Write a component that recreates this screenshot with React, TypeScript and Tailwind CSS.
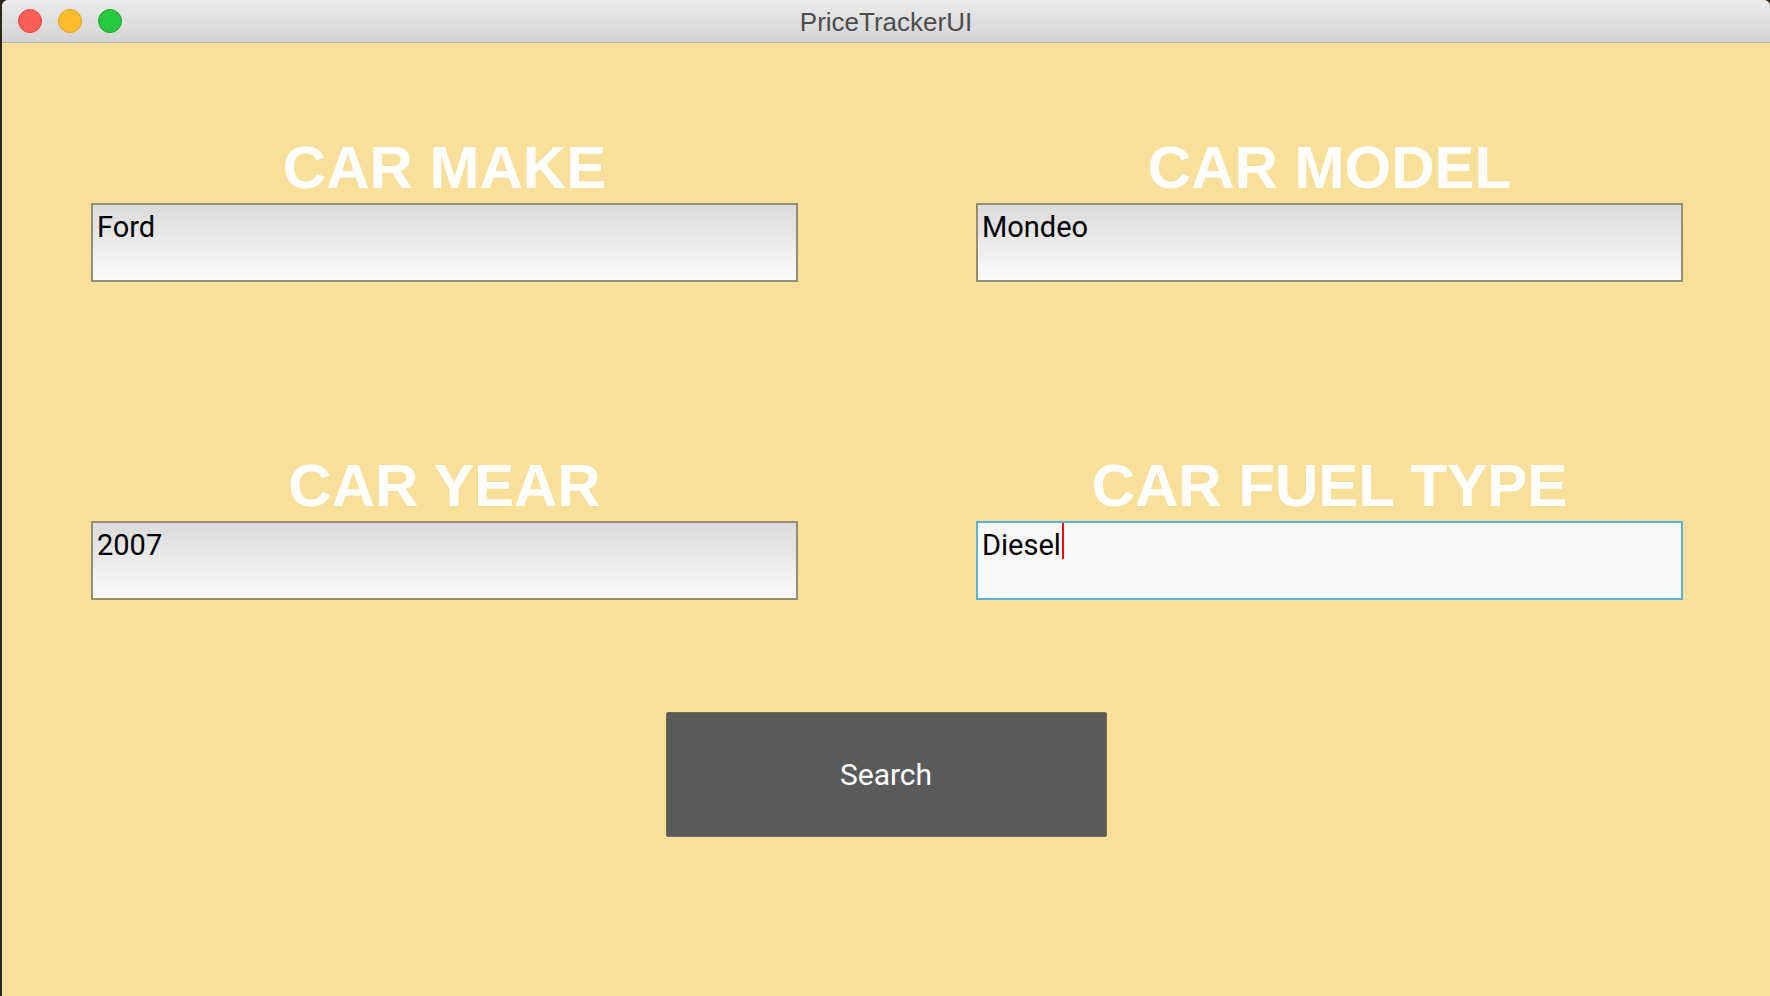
import React from 'react';

/* ─── Title bar ─── */
function TitleBar() {
  return (
    <div className="relative h-[43px] shrink-0 rounded-t-[6px] border-b border-[#b1b1b1] bg-gradient-to-b from-[#ebebeb] to-[#d4d4d4]">
      <div className="flex h-full items-center gap-[16px] pl-[16px]">
        <span className="h-[24px] w-[24px] rounded-full border border-[#e0443e] bg-[#ff5f57]" />
        <span className="h-[24px] w-[24px] rounded-full border border-[#dea123] bg-[#ffbd2e]" />
        <span className="h-[24px] w-[24px] rounded-full border border-[#1aab29] bg-[#28c940]" />
      </div>
      <div className="absolute inset-0 flex items-center justify-center pt-[3px] text-[26px] text-[#4d4d4d] font-['Liberation_Sans',Arial,sans-serif]">
        PriceTrackerUI
      </div>
    </div>
  );
}

/* ─── Field ─── */
interface FieldProps {
  label: string;
  value: string;
  focused?: boolean;
}

function Field({ label, value, focused = false }: FieldProps) {
  return (
    <div className="flex flex-col">
      <div className="text-center text-[60px] font-bold leading-[58px] text-white font-['Liberation_Sans',Arial,sans-serif]">
        {label}
      </div>
      <div
        className={
          focused
            ? 'mt-[6px] h-[79px] border-2 border-[#5ab3d6] bg-[#f8f8f8] pl-[4px] pt-[1px]'
            : 'mt-[6px] h-[79px] border-2 border-[#938e76] bg-gradient-to-b from-[#dbdbdb] to-[#fbfbfb] pl-[4px] pt-[1px]'
        }
      >
        <div className="flex items-start text-[29px] text-black font-['Roboto',sans-serif]">
          <span>{value}</span>
          {focused && <span className="ml-[1px] mt-[-1px] h-[36px] w-[2px] bg-[#ff0000]" />}
        </div>
      </div>
    </div>
  );
}

/* ─── Main ─── */
export default function App() {
  return (
    <div className="flex h-[996px] w-[1770px] bg-[#2b2620]">
      <div className="ml-[2px] flex flex-1 flex-col overflow-hidden rounded-t-[6px] bg-[#f8e09b]">
        <TitleBar />

        <div className="flex flex-col pt-[96px]">
          <div className="grid grid-cols-[707px_707px] gap-x-[178px] gap-y-[175px] pl-[89px]">
            <Field label="CAR MAKE" value="Ford" />
            <Field label="CAR MODEL" value="Mondeo" />
            <Field label="CAR YEAR" value="2007" />
            <Field label="CAR FUEL TYPE" value="Diesel" focused />
          </div>

          <div className="mt-[112px] flex justify-center">
            <button className="flex h-[125px] w-[441px] items-center justify-center rounded-[2px] border border-[#6e6a58] bg-[#5a5a5a] text-[30px] text-white font-['Roboto',sans-serif]">
              Search
            </button>
          </div>
        </div>
      </div>
    </div>
  );
}
